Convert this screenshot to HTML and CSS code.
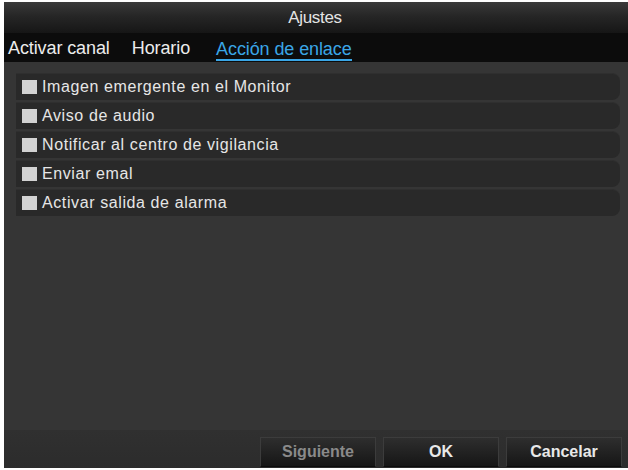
FILE: index.html
```html
<!DOCTYPE html>
<html lang="es">
<head>
    <meta charset="UTF-8">
    <title>Ajustes</title>
    <link rel="stylesheet" href="styles.css">
</head>
<body>
    <div class="dialog">
        <div class="title">Ajustes</div>
        <div class="tabs">
            <span class="tab">Activar canal</span>
            <span class="tab">Horario</span>
            <span class="tab active">Acción de enlace</span>
        </div>
        <div class="content">
            <div class="row"><span class="box"></span>Imagen emergente en el Monitor</div>
            <div class="row"><span class="box"></span>Aviso de audio</div>
            <div class="row"><span class="box"></span>Notificar al centro de vigilancia</div>
            <div class="row"><span class="box"></span>Enviar emal</div>
            <div class="row"><span class="box"></span>Activar salida de alarma</div>
        </div>
        <div class="footer">
            <button class="btn disabled">Siguiente</button>
            <button class="btn">OK</button>
            <button class="btn">Cancelar</button>
        </div>
    </div>
</body>
</html>
```
FILE: styles.css
```css
*{
    margin: 0;
    padding: 0;
    box-sizing: border-box;
}
body{
    background: #fff;
    font-family: "Liberation Sans", Arial, sans-serif;
    overflow: hidden;
}
.dialog{
    margin: 2px 0 0 4px;
    width: 624px;
    height: 466px;
    background: #353535;
    display: flex;
    flex-direction: column;
}
.title{
    height: 31px;
    background: linear-gradient(#3a3a3a, #262626 45%, #161616);
    color: #e4e4e4;
    font-size: 17px;
    letter-spacing: -0.3px;
    display: flex;
    align-items: center;
    justify-content: center;
    padding-right: 2px;
}
.tabs{
    height: 29px;
    background: #0c0c0c;
    display: flex;
    align-items: center;
    padding-left: 4px;
}
.tab{
    color: #ececec;
    font-size: 18px;
    letter-spacing: -0.1px;
    padding-top: 2px;
    margin-right: 22px;
}
.tab:nth-child(2){
    margin-right: 26px;
}
.tab.active{
    color: #3aa6e6;
    border-bottom: 2px solid #3aa6e6;
    line-height: 20px;
    padding-top: 4px;
}
.content{
    flex: 1;
    padding: 11px 8px 0 12px;
    background: #353535;
}
.row{
    height: 27px;
    margin-bottom: 2px;
    background: #292929;
    border-radius: 0 8px 8px 0;
    display: flex;
    align-items: center;
    padding-left: 6px;
    color: #e6e6e6;
    font-size: 16px;
    letter-spacing: 0.6px;
    border-top: 1px solid #2f2f2f;
}
.box{
    width: 15px;
    height: 14px;
    background: #d2d2d2;
    margin-right: 5px;
}
.footer{
    height: 38px;
    background: linear-gradient(#303030, #2c2c2c);
    display: flex;
    justify-content: flex-end;
    align-items: flex-end;
    gap: 7px;
    padding: 0 6px 1px 0;
}
.btn{
    width: 116px;
    height: 30px;
    background: linear-gradient(#2e2e2e, #161616);
    border: 1px solid #3c3c3c;
    border-bottom-color: #0c0c0c;
    color: #e8e8e8;
    font-family: "Liberation Sans", Arial, sans-serif;
    font-size: 16px;
    font-weight: bold;
}
.btn.disabled{
    color: #8a8a8a;
}
```
